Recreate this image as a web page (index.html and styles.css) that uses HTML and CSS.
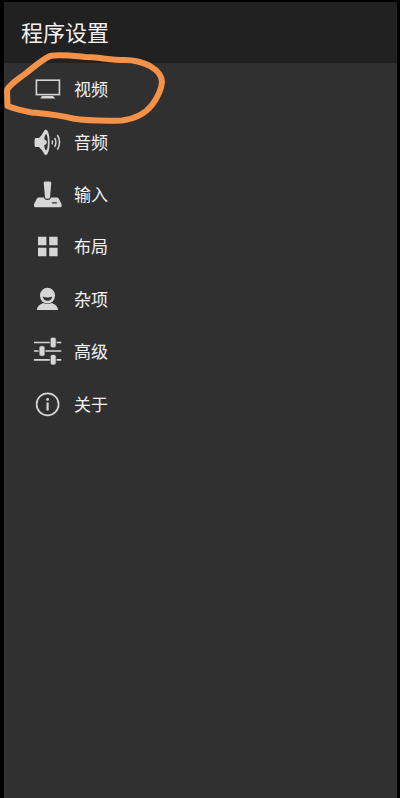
FILE: index.html
```html
<!DOCTYPE html>
<html lang="zh-CN">
<head>
<meta charset="utf-8">
<meta name="viewport" content="width=device-width, initial-scale=1">
<title>程序设置</title>
<link rel="stylesheet" href="styles.css">
</head>
<body>
<div class="screen">
  <header class="bar"><h1>程序设置</h1></header>
  <nav class="menu">
    <a class="item" href="#video">
      <svg class="icon" viewBox="0 0 28 28" aria-hidden="true"><rect x="2.4" y="4.2" width="23" height="14.4" fill="none" stroke="currentColor" stroke-width="1.6"/><path d="M8 20h11l2.3 2.6H6.3z"/></svg>
      <span>视频</span>
    </a>
    <a class="item" href="#audio">
      <svg class="icon" viewBox="0 0 28 28" aria-hidden="true"><path d="M1.500 9H5Q8.500 5.500 10 2q.6-1.500 2-1.500 3.600 1.500 3.600 12.800T12 26q-1.400 0-2-1.500-1.500-3.300-5-6.500H1.500Q.5 18 .5 13.500T1.500 9z"/><ellipse cx="12" cy="13.300" rx="1.900" ry="8" fill="#303030"/><path d="M10 10.500q2.800.4 2.800 2.800T10 16.100z"/><path d="M18 11.500q1.300 1.900 0 3.800M20.600 8.800q2.700 4.500 0 9M23.400 6q4.300 7.300 0 14.600" fill="none" stroke="currentColor" stroke-width="1.500"/></svg>
      <span>音频</span>
    </a>
    <a class="item" href="#input">
      <svg class="icon" viewBox="0 0 28 28" aria-hidden="true"><path d="M11 .5h5q1.400 0 1.300 1.500L16 16.200q0 1.600-2.500 1.600T11 16.200L9.700 2Q9.600.5 11 .5z"/><path d="M4.500 16.500H10q.5 2.500 3.500 2.500t3.500-2.500h6q1.200 0 1.800 1.200l2.400 4.500q.4.800.4 1.800v1q0 1.200-1.200 1.200H1.200Q0 26.200 0 25v-1q0-1 .4-1.800l2.400-4.500q.6-1.200 1.700-1.200z"/><path d="M18.500 21.800h4" stroke="#303030" stroke-width="1.300" stroke-linecap="round"/></svg>
      <span>输入</span>
    </a>
    <a class="item" href="#layout">
      <svg class="icon" viewBox="0 0 28 28" aria-hidden="true"><path d="M4 3.800h8.400v8.400H4zM15.200 3.800h8.400v8.400h-8.400zM4 14.800h8.400v8.400H4zM15.200 14.800h8.400v8.400h-8.400z"/></svg>
      <span>布局</span>
    </a>
    <a class="item" href="#misc">
      <svg class="icon" viewBox="0 0 28 28" aria-hidden="true"><ellipse cx="13.500" cy="9.600" rx="7.500" ry="7.900"/><path d="M2.800 24q.4-4.800 6.500-7 4.200 2.200 8.400 0 6 2.200 6.400 7z"/><path d="M8.800 10.500q4.700 1.800 9.400 0-.6 4.200-4.700 4.200t-4.700-4.200z" fill="#303030"/></svg>
      <span>杂项</span>
    </a>
    <a class="item" href="#advanced">
      <svg class="icon" viewBox="0 0 28 28" aria-hidden="true"><path d="M0 4.500h27.300M0 13h27.300M0 21.800h27.300" stroke="currentColor" stroke-width="1.700"/><g stroke="#303030" stroke-width=".8"><rect x="16.200" y="-.8" width="6" height="10.600" rx="2"/><rect x="5" y="7.700" width="6" height="10.600" rx="2"/><rect x="16.200" y="16.500" width="6" height="10.600" rx="2"/></g></svg>
      <span>高级</span>
    </a>
    <a class="item" href="#about">
      <svg class="icon" viewBox="0 0 28 28" aria-hidden="true"><circle cx="13.600" cy="13.300" r="11" fill="none" stroke="currentColor" stroke-width="1.700"/><circle cx="13.600" cy="8.500" r="1.400"/><path d="M12.500 11.500h2.200v8h-2.200z"/></svg>
      <span>关于</span>
    </a>
  </nav>
  <svg class="mark" viewBox="0 0 170 130" aria-hidden="true"><path d="M7 90L7.500 106Q18 110 32 112.500C47 114 59 115 73 118.500C88 121 102 121 122 120.500C133 119 145 114 152 105Q161 93 162 82Q162 73 150 66Q138 60 125 60C110 60 98 57 85 57C75 56 60 54 50 56C40 61 34 67 25 74C17 80 10 84 7 90z"/></svg>
</div>
</body>
</html>
```
FILE: styles.css
```css
* {
  box-sizing: border-box;
}

body {
  margin: 0;
  background: #000;
  color: #f2f2f2;
  font-family: "Noto Sans CJK SC", sans-serif;
}

.screen {
  position: relative;
  min-height: 100vh;
  border: solid #000;
  border-width: 2px 3px 0 4px;
  background: #303030;
}

.bar {
  display: flex;
  align-items: center;
  height: 61px;
  padding: 0 17px 4px;
  background: #212121;
}

.bar h1 {
  margin: 0;
  font-size: 22px;
  font-weight: 400;
  line-height: 32px;
}

.menu {
  display: grid;
  grid-auto-rows: 1fr;
  height: 367px;
  margin-top: 1px;
}

.item {
  display: flex;
  align-items: center;
  gap: 12px;
  padding: 0 30px;
  color: inherit;
  font-size: 17px;
  line-height: 24px;
  text-decoration: none;
}

.item span {
  padding-bottom: 2px;
}

.icon {
  flex: none;
  width: 28px;
  height: 28px;
  color: #d6d6d6;
  fill: currentColor;
  overflow: visible;
}

/* Hand-drawn ring laid over the first entry */
.mark {
  position: absolute;
  top: -2px;
  left: -4px;
  width: 170px;
  height: 130px;
  fill: none;
  stroke: #f5924a;
  stroke-width: 6px;
  stroke-linejoin: round;
  pointer-events: none;
}
```
